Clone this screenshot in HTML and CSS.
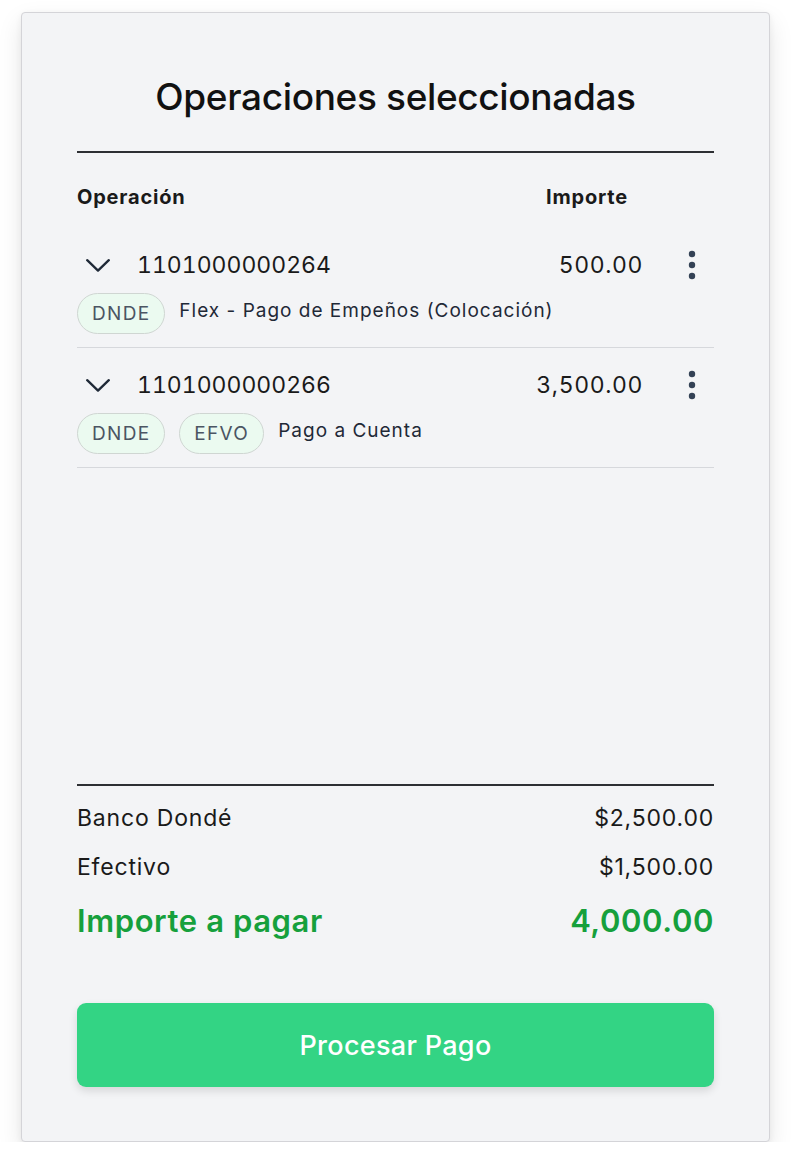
FILE: index.html
```html
<!DOCTYPE html>
<html lang="es">
<head>
<meta charset="utf-8">
<title>Operaciones seleccionadas</title>
<link rel="stylesheet" href="styles.css">
</head>
<body>
<div class="card">
  <h1 class="title">Operaciones seleccionadas</h1>
  <div class="rule"></div>
  <div class="list">
    <div class="list-head">
      <span class="head-op">Operación</span>
      <span class="head-amt">Importe</span>
    </div>
    <div class="op">
      <div class="op-top">
        <svg class="chev" width="24" height="13" viewBox="0 0 24 13"><polyline points="1.2,1.2 12,11.6 22.8,1.2" fill="none" stroke="#1f2937" stroke-width="2.3" stroke-linecap="round" stroke-linejoin="round"/></svg>
        <span class="op-num">1101000000264</span>
        <span class="op-amt">500.00</span>
        <span class="kebab"><svg width="8" height="30" viewBox="0 0 8 30"><circle cx="4" cy="4" r="3.2" fill="#334155"/><circle cx="4" cy="15" r="3.2" fill="#334155"/><circle cx="4" cy="26" r="3.2" fill="#334155"/></svg></span>
      </div>
      <div class="op-bottom">
        <span class="tag">DNDE</span>
        <span class="op-desc">Flex - Pago de Empeños (Colocación)</span>
      </div>
    </div>
    <div class="op">
      <div class="op-top">
        <svg class="chev" width="24" height="13" viewBox="0 0 24 13"><polyline points="1.2,1.2 12,11.6 22.8,1.2" fill="none" stroke="#1f2937" stroke-width="2.3" stroke-linecap="round" stroke-linejoin="round"/></svg>
        <span class="op-num">1101000000266</span>
        <span class="op-amt">3,500.00</span>
        <span class="kebab"><svg width="8" height="30" viewBox="0 0 8 30"><circle cx="4" cy="4" r="3.2" fill="#334155"/><circle cx="4" cy="15" r="3.2" fill="#334155"/><circle cx="4" cy="26" r="3.2" fill="#334155"/></svg></span>
      </div>
      <div class="op-bottom">
        <span class="tag">DNDE</span>
        <span class="tag">EFVO</span>
        <span class="op-desc">Pago a Cuenta</span>
      </div>
    </div>
  </div>
  <div class="rule"></div>
  <div class="summary">
    <div class="sum-row"><span>Banco Dondé</span><span>$2,500.00</span></div>
    <div class="sum-row"><span>Efectivo</span><span>$1,500.00</span></div>
    <div class="sum-total"><span>Importe a pagar</span><span>4,000.00</span></div>
  </div>
  <button class="pay">Procesar Pago</button>
</div>
</body>
</html>
```

FILE: styles.css
```css
* { box-sizing: border-box; }
html, body { margin: 0; padding: 0; background: #ffffff; }
body {
  font-family: Inter, "Noto Sans", "Liberation Sans", sans-serif;
  color: #1f2937;
  padding: 12px 22px 0 21px;
}
.card {
  height: 1130px;
  background: #f3f4f6;
  border: 1px solid #d4d4d8;
  border-radius: 4px;
  box-shadow: 0 10px 24px rgba(0, 0, 0, 0.10), 0 2px 6px rgba(0, 0, 0, 0.06);
  padding: 62px 55px 54px 55px;
  display: flex;
  flex-direction: column;
}
.title {
  margin: 0;
  font-size: 37px;
  line-height: 44px;
  font-weight: 500;
  letter-spacing: -0.35px;
  text-align: center;
  color: #111111;
}
.rule {
  height: 2px;
  background: #2d2f33;
  flex: none;
}
.title + .rule { margin-top: 32px; }
.list { flex: 1; }
.list-head {
  display: flex;
  margin-top: 32px;
  font-size: 20px;
  line-height: 24px;
  font-weight: 700;
  letter-spacing: 0.8px;
  color: #1a1a1a;
  padding-right: 86px;
  margin-bottom: 19px;
}
.head-op { flex: 1; }
.op {
  padding: 20px 0 13px;
  border-bottom: 1px solid #d6d8dc;
}
.op-top {
  display: flex;
  align-items: center;
  height: 34px;
}
.chev { margin-left: 9px; margin-right: 27px; flex: none; }
.op-num, .op-amt {
  font-size: 23px;
  line-height: 28px;
  font-variant-numeric: tabular-nums;
  letter-spacing: 0.6px;
  color: #1a1a1a;
}
.op-num { flex: 1; letter-spacing: 0; }
.kebab {
  width: 44px;
  margin-left: 27px;
  display: flex;
  justify-content: center;
}
.op-bottom {
  margin-top: 11px;
  display: flex;
  align-items: center;
  gap: 14px;
}
.tag {
  height: 41px;
  padding: 0 14px;
  border: 1px solid #cfd6d2;
  border-radius: 21px;
  background: #ebfaf0;
  color: #4b5563;
  font-size: 19px;
  letter-spacing: 1.3px;
  display: flex;
  align-items: center;
}
.op-desc {
  font-size: 19px;
  line-height: 24px;
  letter-spacing: 1px;
  color: #1f2937;
  padding-bottom: 6px;
}
.summary { margin-top: 17px; }
.sum-row {
  display: flex;
  justify-content: space-between;
  font-size: 23px;
  line-height: 30px;
  letter-spacing: 0.8px;
  color: #1a1a1a;
  margin-bottom: 19px;
}
.sum-total {
  display: flex;
  justify-content: space-between;
  font-size: 31px;
  line-height: 40px;
  font-weight: 600;
  letter-spacing: 0.6px;
  color: #16a03c;
  margin-top: 1px;
}
.pay {
  margin-top: 62px;
  height: 84px;
  border: none;
  border-radius: 9px;
  background: #33d484;
  color: #ffffff;
  font-family: Inter, "Noto Sans", "Liberation Sans", sans-serif;
  font-size: 27px;
  font-weight: 500;
  letter-spacing: 0.3px;
  box-shadow: 0 4px 8px rgba(0, 0, 0, 0.12);
  flex: none;
}
```
